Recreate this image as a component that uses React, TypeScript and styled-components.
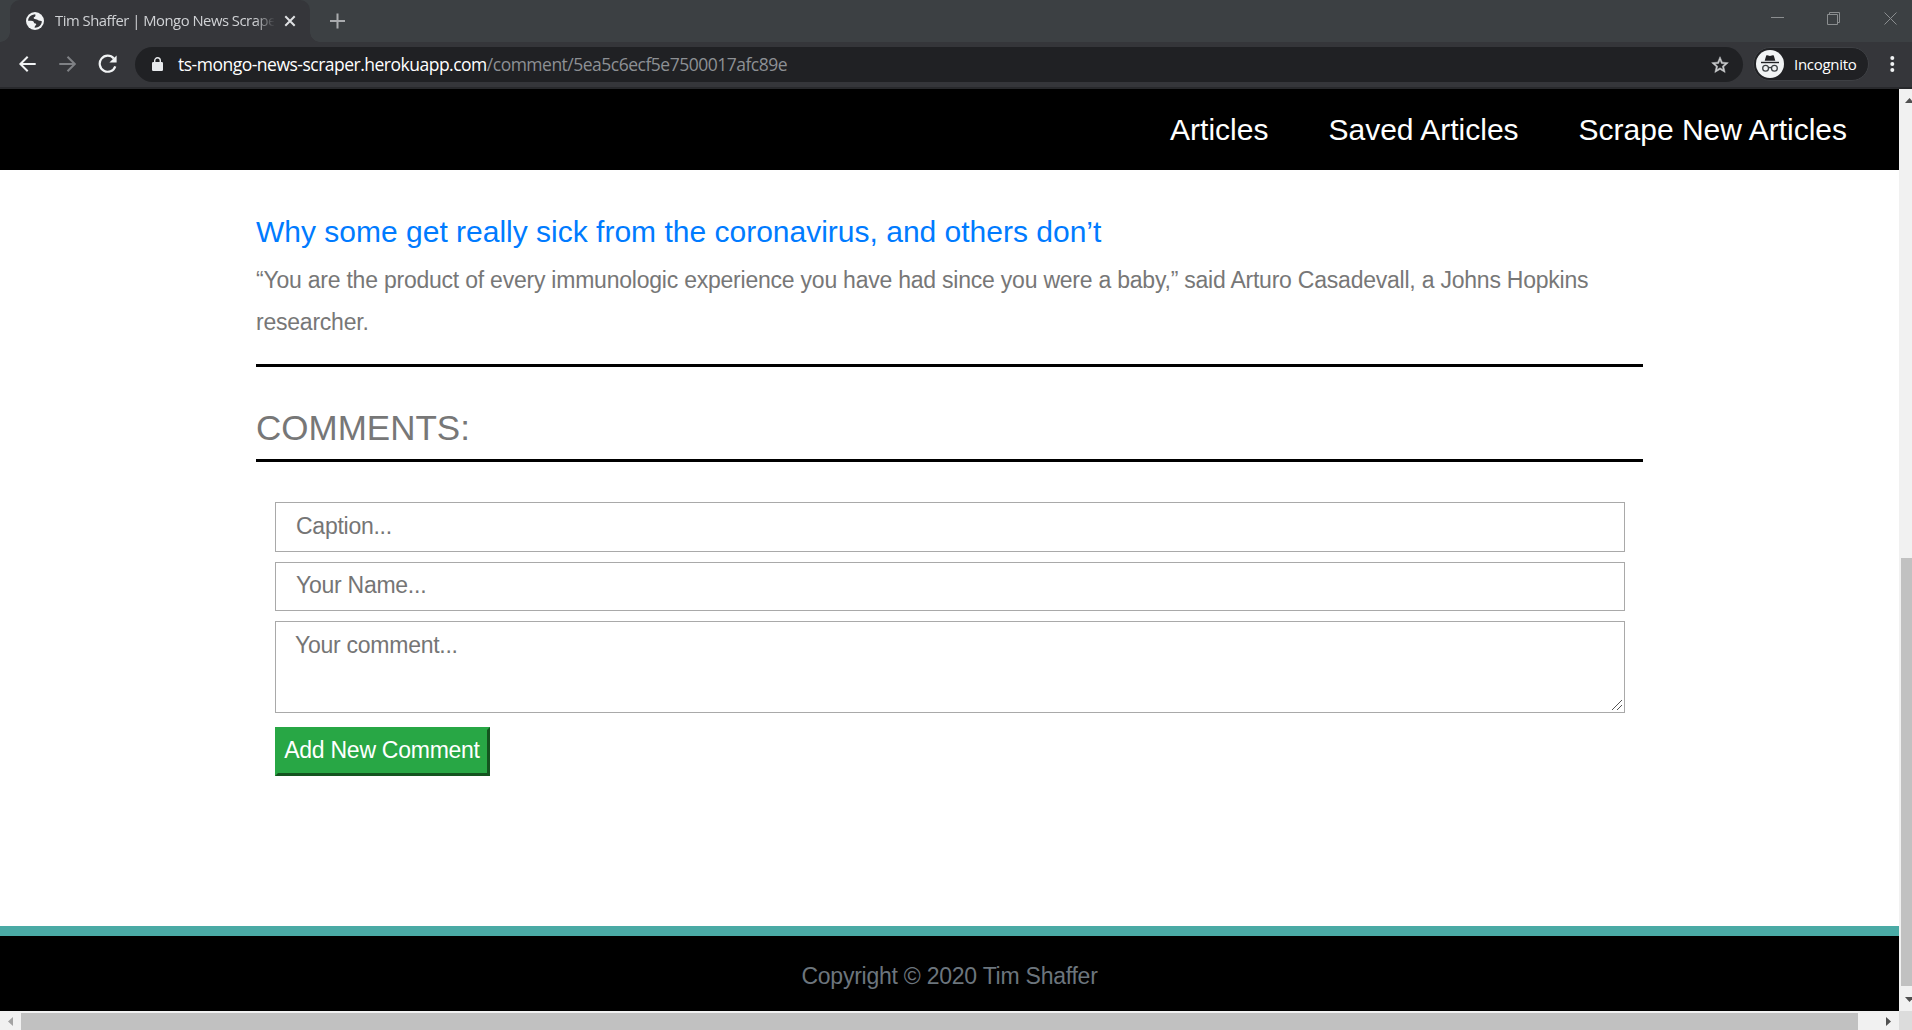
import React from "react";
import styled, { createGlobalStyle } from "styled-components";

const GlobalStyle = createGlobalStyle`
  * { box-sizing: border-box; }
  html, body { margin: 0; padding: 0; }
  body {
    overflow: hidden;
    font-family: "Liberation Sans", Arial, sans-serif;
    background: #fff;
  }
`;

const Window = styled.div`
  display: flex;
  flex-direction: column;
  width: 1912px;
  height: 1030px;
  overflow: hidden;
`;

const TabStrip = styled.div`
  flex: none;
  display: flex;
  align-items: center;
  height: 42px;
  padding-left: 10px;
  background: #3c4043;
`;

const Tab = styled.div`
  position: relative;
  display: flex;
  align-items: center;
  width: 300px;
  height: 42px;
  padding: 0 14px 0 16px;
  border-radius: 10px 10px 0 0;
  background: #35363a;
  &::before,
  &::after {
    content: "";
    position: absolute;
    bottom: 0;
    width: 10px;
    height: 10px;
  }
  &::before {
    left: -10px;
    background: radial-gradient(circle at 0 0, transparent 9.5px, #35363a 10px);
  }
  &::after {
    right: -10px;
    background: radial-gradient(circle at 100% 0, transparent 9.5px, #35363a 10px);
  }
`;

const TabTitle = styled.span`
  flex: 1;
  margin: -2px 10px 0 11px;
  overflow: hidden;
  white-space: nowrap;
  font: 14.8px/24px "Open Sans", "Noto Sans", sans-serif;
  letter-spacing: -0.48px;
  color: #d0d2d5;
  mask-image: linear-gradient(to right, #000 200px, transparent 220px);
`;

const NewTab = styled.div`
  display: flex;
  margin-left: 19px;
  flex: 1;
`;

const WindowControls = styled.div`
  display: flex;
  align-items: flex-start;
  align-self: flex-start;
  gap: 43px;
  margin: 12px 14px 0 0;
`;

const Toolbar = styled.div`
  flex: none;
  display: flex;
  align-items: center;
  height: 47px;
  padding: 0 14px 2px 18px;
  border-bottom: 2px solid #28292c;
  background: #35363a;
`;

const NavButtons = styled.div`
  display: flex;
  align-items: center;
  gap: 22px;
  width: 117px;
`;

const Omnibox = styled.div`
  display: flex;
  align-items: center;
  width: 1608px;
  height: 35px;
  margin-top: 2px;
  padding: 0 13px 0 17px;
  border-radius: 18px;
  background: #202124;
`;

const Url = styled.div`
  flex: 1;
  display: flex;
  margin: -1px 0 0 15px;
  font: 17.5px/24px "Open Sans", "Noto Sans", sans-serif;
`;

const UrlPart = styled.span<{ $muted?: boolean }>`
  color: ${(p) => (p.$muted ? "#8d9094" : "#fff")};
  letter-spacing: -0.5px;
`;

const IncognitoChip = styled.div`
  display: flex;
  align-items: center;
  width: 116px;
  height: 34px;
  margin: 1px 0 0 10px;
  padding-left: 2px;
  border: 1px solid #3e4044;
  border-radius: 17px;
  background: #202124;
`;

const ChipLabel = styled.span`
  margin-left: 10px;
  font: 15px/22px "Open Sans", "Noto Sans", sans-serif;
  letter-spacing: -0.3px;
  color: #fff;
`;

const Menu = styled.div`
  display: flex;
  margin-left: auto;
`;

const Viewport = styled.div`
  display: grid;
  grid-template: 922px 19px / 1899px 13px;
`;

const Page = styled.div`
  display: flex;
  flex-direction: column;
  background: #fff;
`;

const SiteNav = styled.nav`
  flex: none;
  display: flex;
  justify-content: flex-end;
  align-items: center;
  height: 81px;
  padding-right: 52px;
  gap: 60px;
  background: #000;
`;

const NavLink = styled.a`
  font-size: 30px;
  line-height: 45px;
  white-space: nowrap;
  color: #fff;
`;

const Main = styled.main`
  flex: 1;
  width: 1387px;
  margin-left: 256px;
`;

const Article = styled.article`
  height: 197px;
  padding-top: 44px;
  border-bottom: 3px solid #000;
`;

const Headline = styled.h2`
  margin: 0;
  font-size: 30px;
  font-weight: 400;
  line-height: 36px;
  color: #007bff;
`;

const Summary = styled.p`
  margin: 9px 0 0;
  font-size: 23px;
  line-height: 42px;
  letter-spacing: -0.227px;
  color: #777;
`;

const SectionTitle = styled.h3`
  height: 95px;
  margin: 0;
  padding-top: 40px;
  border-bottom: 3px solid #000;
  font-size: 35px;
  font-weight: 400;
  line-height: 42px;
  color: #777;
`;

const Form = styled.form`
  display: flex;
  flex-direction: column;
  align-items: flex-start;
  padding: 40px 18px 0 19px;
`;

const Input = styled.input<{ $height: number; $lift: number }>`
  width: 1350px;
  height: ${(p) => p.$height}px;
  margin: 0 0 10px;
  padding: 0 20px ${(p) => p.$lift}px;
  border: 1px solid #a9a9a9;
  border-radius: 0;
  outline: none;
  background: #fff;
  font: 23px/36px "Liberation Sans", Arial, sans-serif;
  letter-spacing: -0.26px;
  &::placeholder {
    color: #757575;
  }
`;

const TextAreaFrame = styled.div`
  position: relative;
  height: 92px;
  margin-bottom: 14px;
`;

const TextArea = styled.textarea`
  display: block;
  width: 1350px;
  height: 92px;
  padding: 5px 19px;
  border: 1px solid #a9a9a9;
  border-radius: 0;
  outline: none;
  resize: none;
  font: 23px/36px "Liberation Sans", Arial, sans-serif;
  letter-spacing: -0.26px;
  &::placeholder {
    color: #757575;
  }
`;

const Grip = styled.svg`
  position: absolute;
  right: 3px;
  bottom: 3px;
`;

const Submit = styled.button`
  width: 215px;
  height: 49px;
  padding: 0 1px 3px 0;
  border: 3px solid;
  border-color: #28a745 #14541f #14541f #28a745;
  background: #28a745;
  font: 23px/36px "Liberation Sans", Arial, sans-serif;
  letter-spacing: -0.26px;
  white-space: nowrap;
  color: #fff;
`;

const Footer = styled.footer`
  flex: none;
  height: 85px;
  padding-top: 22px;
  border-top: 10px solid #4aaaa5;
  background: #000;
  text-align: center;
  font-size: 23px;
  line-height: 36px;
  letter-spacing: -0.24px;
  color: #6c757d;
`;

const VerticalBar = styled.div`
  display: flex;
  flex-direction: column;
  align-items: flex-end;
  padding-top: 9px;
  background: #f1f1f1;
`;

const VerticalThumb = styled.div`
  width: 11px;
  height: 428px;
  margin: 455px 0 11px;
  background: #c1c1c1;
`;

const HorizontalBar = styled.div`
  display: flex;
  padding: 2px 8px 0;
  background: #f1f1f1;
`;

const HorizontalThumb = styled.div`
  width: 1837px;
  height: 17px;
  margin: 0 28px 0 8px;
  background: #c1c1c1;
`;

const Corner = styled.div`
  background: #dcdcdc;
`;

const ArrowIcon = styled.svg`
  flex: none;
  display: block;
  margin-top: 4px;
`;

const EdgeArrow = styled.svg`
  flex: none;
  display: block;
  align-self: flex-start;
  margin-left: 6px;
`;

function GlobeIcon() {
  return (
    <svg width="18" height="18" viewBox="0 0 18 18">
      <circle cx="9" cy="9" r="9" fill="#f1f3f4" />
      <path
        d="M9.2 2.2C6.200 2.400 3.600 3.900 2.500 6.400C2.200 7.200 2.100 8 2.100 8.800C4 9 6.600 8.700 7.500 9.600C8.200 10.500 7.600 11.500 9.400 11.600C10.400 11.600 10.500 12.600 9.700 13.300C9 13.900 8.600 14.700 8.600 15.800C11 15.900 13.400 14.900 14.900 12.500C15.500 11.500 15.800 10.400 15.900 9.200C14.600 8.800 13.800 9 12.800 8.600C11.800 8.100 11.300 7.200 9.900 7.200C8.300 7.200 7.700 6.800 7.700 5.800C7.700 4.800 8.800 4.900 9.300 4.200C9.700 3.600 9.300 2.900 9.200 2.200Z"
        fill="#35363a"
      />
      <path d="M9.4 5.100C10.200 4.100 12 4.500 12.200 3.200C14 4.300 15.100 5.900 15.500 7.800C13.900 7.900 13.400 7.500 12.400 6.800C11.400 6.200 10 6.400 9.400 5.100Z" fill="#f1f3f4" />
    </svg>
  );
}

function BrowserChrome() {
  return (
    <>
      <TabStrip>
        <Tab>
          <GlobeIcon />
          <TabTitle>Tim Shaffer | Mongo News Scraper</TabTitle>
          <svg width="12" height="12" viewBox="0 0 12 12">
            <path d="M1.300 1.300L10.700 10.700M10.700 1.300L1.300 10.700" stroke="#dfe1e3" strokeWidth="2" />
          </svg>
        </Tab>
        <NewTab>
          <svg width="17" height="16" viewBox="0 0 17 16">
            <path d="M1 8H16M8.500 0.500V15.500" stroke="#a9abae" strokeWidth="2" />
          </svg>
        </NewTab>
        <WindowControls>
          <svg width="13" height="13" viewBox="0 0 13 13">
            <path d="M0 5.500H13" stroke="#8b8e90" />
          </svg>
          <svg width="14" height="14" viewBox="0 0 14 14">
            <path d="M0.500 2.500H10.500V12.500H0.500ZM2.500 2.500V0.500H12.500V10.500H10.500" fill="none" stroke="#8b8e90" />
          </svg>
          <svg width="14" height="14" viewBox="0 0 14 14">
            <path d="M0.500 0.500L12.500 12.500M12.500 0.500L0.500 12.500" stroke="#8b8e90" />
          </svg>
        </WindowControls>
      </TabStrip>
      <Toolbar>
        <NavButtons>
          <svg width="18" height="18" viewBox="0 0 18 18">
            <path d="M17.700 9H3M9.700 1.700L2.400 9L9.700 16.300" fill="none" stroke="#f1f3f4" strokeWidth="2" />
          </svg>
          <svg width="18" height="18" viewBox="0 0 18 18">
            <path d="M1.300 9H16.500M9.500 1.700L16.800 9L9.500 16.300" fill="none" stroke="#7f8185" strokeWidth="2" />
          </svg>
          <svg width="20" height="20" viewBox="0 0 20 20">
            <path d="M15.800 4.500A8 8 0 1 0 17.300 12.300" fill="none" stroke="#f1f3f4" strokeWidth="2.200" />
            <path d="M18.600 1.400V8.600H11.400Z" fill="#f1f3f4" />
          </svg>
        </NavButtons>
        <Omnibox>
          <svg width="11" height="15" viewBox="0 0 11 15">
            <path d="M2.700 6V3.600A2.800 2.800 0 0 1 8.300 3.600V6" fill="none" stroke="#e8eaed" strokeWidth="1.400" />
            <rect x="0" y="5" width="11" height="9" rx="1.200" fill="#e8eaed" />
          </svg>
          <Url>
            <UrlPart>ts-mongo-news-scraper.herokuapp.com</UrlPart>
            <UrlPart $muted>/comment/5ea5c6ecf5e7500017afc89e</UrlPart>
          </Url>
          <svg width="20" height="20" viewBox="0 0 24 24">
            <path
              d="M22 9.240l-7.190-.620L12 2 9.190 8.630 2 9.240l5.460 4.730L5.820 21 12 17.270 18.180 21l-1.630-7.030L22 9.240zM12 15.400l-3.760 2.270 1-4.280-3.320-2.880 4.380-.380L12 6.100l1.710 4.040 4.380.380-3.320 2.880 1 4.280L12 15.400z"
              fill="#c8cacc"
              stroke="#c8cacc"
              strokeWidth=".6"
            />
          </svg>
        </Omnibox>
        <IncognitoChip>
          <svg width="28" height="28" viewBox="0 0 28 28">
            <circle cx="14" cy="14" r="14" fill="#f1f3f4" />
            <path d="M10.200 5.600Q10.500 5 11.200 5.200L14 5.900L16.800 5.200Q17.500 5 17.800 5.600L19.300 10.800H8.700Z" fill="#202124" />
            <path d="M5 12.500H23" stroke="#202124" strokeWidth="1.400" />
            <g fill="none" stroke="#3c4043" strokeWidth="1.300">
              <circle cx="9.600" cy="18.200" r="2.900" />
              <circle cx="18.400" cy="18.200" r="2.900" />
              <path d="M12.500 17.900Q14 17 15.500 17.900" />
            </g>
          </svg>
          <ChipLabel>Incognito</ChipLabel>
        </IncognitoChip>
        <Menu>
          <svg width="12" height="18" viewBox="0 0 12 18">
            <g fill="#f1f3f4">
              <circle cx="6.300" cy="3" r="2" />
              <circle cx="6.300" cy="9" r="2" />
              <circle cx="6.300" cy="15" r="2" />
            </g>
          </svg>
        </Menu>
      </Toolbar>
    </>
  );
}

export default function App() {
  return (
    <Window>
      <GlobalStyle />
      <BrowserChrome />
      <Viewport>
        <Page>
          <SiteNav>
            <NavLink>Articles</NavLink>
            <NavLink>Saved Articles</NavLink>
            <NavLink>Scrape New Articles</NavLink>
          </SiteNav>
          <Main>
            <Article>
              <Headline>Why some get really sick from the coronavirus, and others don’t</Headline>
              <Summary>
                “You are the product of every immunologic experience you have had since you were a baby,” said Arturo
                Casadevall, a Johns Hopkins researcher.
              </Summary>
            </Article>
            <SectionTitle>COMMENTS:</SectionTitle>
            <Form>
              <Input $height={50} $lift={2} placeholder="Caption..." />
              <Input $height={49} $lift={3} placeholder="Your Name..." />
              <TextAreaFrame>
                <TextArea placeholder="Your comment..." />
                <Grip width="10" height="10" viewBox="0 0 10 10">
                  <path d="M0 10L10 0M5 10L10 5" stroke="#555" strokeWidth="1" />
                </Grip>
              </TextAreaFrame>
              <Submit type="button">Add New Comment</Submit>
            </Form>
          </Main>
          <Footer>Copyright © 2020 Tim Shaffer</Footer>
        </Page>
        <VerticalBar>
          <EdgeArrow width="7" height="5" viewBox="0 0 7 5">
            <path d="M0 5L4.500 0L9 5Z" fill="#505050" />
          </EdgeArrow>
          <VerticalThumb />
          <EdgeArrow width="7" height="5" viewBox="0 0 7 5">
            <path d="M0 0H9L4.500 5Z" fill="#505050" />
          </EdgeArrow>
        </VerticalBar>
        <HorizontalBar>
          <ArrowIcon width="5" height="9" viewBox="0 0 5 9">
            <path d="M5 0V9L0 4.500Z" fill="#a3a3a3" />
          </ArrowIcon>
          <HorizontalThumb />
          <ArrowIcon width="5" height="9" viewBox="0 0 5 9">
            <path d="M0 0V9L5 4.500Z" fill="#505050" />
          </ArrowIcon>
        </HorizontalBar>
        <Corner />
      </Viewport>
    </Window>
  );
}
